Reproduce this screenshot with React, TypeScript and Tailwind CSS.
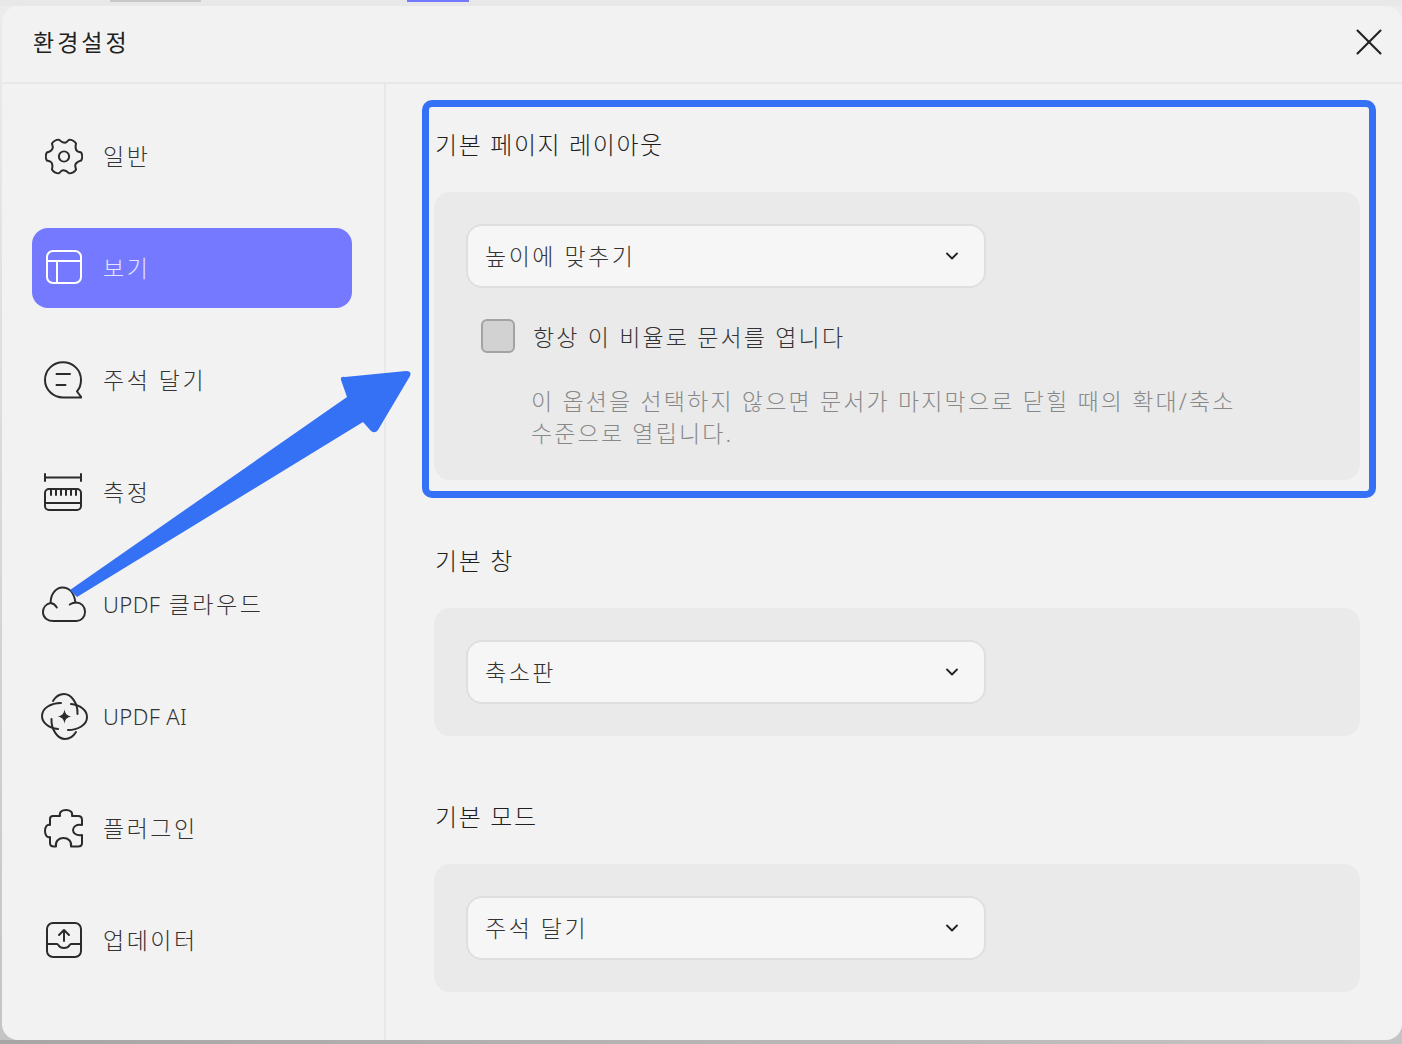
import React from 'react';
import { ChevronDown, X } from 'lucide-react';

function gearPath() {
  const cx = 20;
  const cy = 19.5;
  const pt = (r: number, deg: number) => {
    const a = (deg * Math.PI) / 180;
    return `${(cx + r * Math.cos(a)).toFixed(2)} ${(cy + r * Math.sin(a)).toFixed(2)}`;
  };
  let d = `M${pt(18.6, -13)}`;
  for (let i = 0; i < 6; i++) {
    const a = i * 60;
    d += ` Q${pt(20.4, a)} ${pt(18.6, a + 13)}`;
    d += ` C${pt(15.4, a + 20)} ${pt(13.6, a + 30)} ${pt(15.4, a + 40)}`;
    d += ` L${pt(18.6, a + 47)}`;
  }
  return d + ' Z';
}

function GearIcon() {
  return (
    <svg width="38" height="37" viewBox="0 0 40 39" fill="none" stroke="#2b2b2b" strokeWidth="2.1" strokeLinejoin="round">
      <path d={gearPath()} />
      <circle cx="20" cy="19.5" r="5.4" />
    </svg>
  );
}

function LayoutIcon() {
  return (
    <svg width="36" height="36" viewBox="0 0 36 36" fill="none" stroke="#ffffff" strokeWidth="2">
      <rect x="1" y="1" width="34" height="32" rx="6" />
      <path d="M1 11 H35 M11 11 V33" />
    </svg>
  );
}

function CommentIcon() {
  return (
    <svg className="mr-[2px]" width="38" height="38" viewBox="0 0 38 38" fill="none" stroke="#2b2b2b" strokeWidth="2" strokeLinecap="round" strokeLinejoin="round">
      <path d="M37.5 36.5 H19 C9 36.5 1 28.5 1 19 C1 9 9 1.2 19 1.2 C29 1.2 37 9 37 19 C37 23.5 35.5 27.5 33 30.5 Z" />
      <path d="M12.5 13 H26 M12.5 24 H21.5" />
    </svg>
  );
}

function RulerIcon() {
  return (
    <svg className="mr-[2px]" width="38" height="38" viewBox="0 0 38 38" fill="none" stroke="#2b2b2b" strokeWidth="2" strokeLinecap="round">
      <path d="M1 1 V8 M37 1 V8 M1 4.5 H37" />
      <rect x="1" y="16" width="36" height="21" rx="4" />
      <path d="M1 30 H37 M7 16 V22 M12 16 V22 M17 16 V22 M22 16 V22 M27 16 V22 M32 16 V22" />
    </svg>
  );
}

function CloudIcon() {
  return (
    <svg width="44" height="37" viewBox="0 0 46 38" preserveAspectRatio="none" fill="none" stroke="#2b2b2b" strokeWidth="2" strokeLinecap="round" strokeLinejoin="round">
      <path d="M12 36 H36 C41 36 45 32 45 26.5 C45 21 41 17 35.5 17 C33.5 17 31 17.8 29 19" />
      <path d="M12 36 C6 36 1 32.5 1 27 C1 22 4.5 18.5 9 17.5 C9 8 14.5 1.5 21.5 1.5 C28 1.5 33.5 6.5 35 17" />
      <path d="M9 17.5 C12 18 14 19.5 15.5 22" />
    </svg>
  );
}

function AiIcon() {
  const vertical = 'M12 8 C15 3 19 1 23 1 C30 1 37 10 36.5 21';
  const horizontal = 'M20 10 C10 10 1 15 1 23 C1 30 8 35 17 36';
  return (
    <svg width="47" height="47" viewBox="0 0 47 47" fill="none" stroke="#2b2b2b" strokeWidth="2" strokeLinecap="round">
      <path d={vertical} />
      <path d={vertical} transform="rotate(180 23.5 23.5)" />
      <path d={horizontal} />
      <path d={horizontal} transform="rotate(180 23.5 23.5)" />
      <path d="M23.5 16.5 C24.3 21 26 22.7 30.5 23.5 C26 24.3 24.3 26 23.5 30.5 C22.7 26 21 24.3 16.5 23.5 C21 22.7 22.7 21 23.5 16.5 Z" fill="#2b2b2b" stroke="none" />
    </svg>
  );
}

function PuzzleIcon() {
  return (
    <svg className="mr-[2px]" width="39" height="39" viewBox="0 0 39 39" fill="none" stroke="#2b2b2b" strokeWidth="2" strokeLinejoin="round">
      <path d="M9 7 H16 C15 3 18 1 22 1 C26 1 29 3 28 7 H34 C37 7 38 9 38 11 V16 C32 15 29 18 29 21 C29 24 32 27 38 26 V34 C38 36.5 37 37.5 34 37.5 H27 C28 32 24 29 19.5 29 C15 29 11 32 12 37.5 H10 C7.5 37.5 6 36.5 6 34 V28 C3 29 1 26 1 22 C1 18 3 15 6 16 V10 C6 8 7.5 7 9 7 Z" />
    </svg>
  );
}

function UpdateIcon() {
  return (
    <svg width="36" height="36" viewBox="0 0 36 36" fill="none" stroke="#2b2b2b" strokeWidth="2" strokeLinecap="round" strokeLinejoin="round">
      <rect x="1" y="1" width="34" height="34" rx="6" />
      <path d="M1 22 H11 C13 22 12 26 18 26 C24 26 23 22 25 22 H35" />
      <path d="M18 19 V8 M13 13 L18 8 L23 13" />
    </svg>
  );
}

const navItems = [
  { label: <>일반</>, icon: <GearIcon /> },
  { label: <>보기</>, icon: <LayoutIcon />, active: true },
  { label: <>주석 달기</>, icon: <CommentIcon /> },
  { label: <>측정</>, icon: <RulerIcon /> },
  { label: <><span className="text-[22px] tracking-[0.4px]">UPDF</span> 클라우드</>, icon: <CloudIcon /> },
  { label: <span className="text-[22px] tracking-[0.4px]">UPDF AI</span>, icon: <AiIcon /> },
  { label: <>플러그인</>, icon: <PuzzleIcon /> },
  { label: <>업데이터</>, icon: <UpdateIcon /> },
];

function Dropdown({ value }: { value: string }) {
  return (
    <div className="flex h-[64px] w-[520px] items-center justify-between rounded-[16px] border-2 border-[#dfdfdf] bg-[#f6f6f6] pl-[17px] pr-[22px]">
      <span className="pt-px text-[23px] font-light tracking-[2.5px] text-[#333333]">{value}</span>
      <ChevronDown size={20} strokeWidth={2.2} className="text-[#222222]" />
    </div>
  );
}

export default function App() {
  return (
    <div
      className="relative h-[1044px] w-[1402px] overflow-hidden bg-gradient-to-b from-[#ececec] to-[#c4c4c4] pb-[4px] pl-[2px] pt-[6px] text-[#333333]"
      style={{ fontFamily: '"Noto Sans", "Noto Sans CJK KR", sans-serif' }}
    >
      {/* strips of the page behind the dialog */}
      <div className="absolute inset-x-0 top-0 flex h-[6px] bg-[#e8e8e8]">
        <div className="ml-[110px] h-[2px] w-[91px] bg-[#c8c8c8]" />
        <div className="ml-[206px] h-[2px] w-[62px] bg-[#7479ff]" />
      </div>
      <div className="absolute inset-x-0 bottom-0 h-[4px] bg-gradient-to-r from-[#a6a6a6] to-[#c4c4c4]" />

      <div className="relative flex h-full flex-col rounded-[16px] bg-[#f2f2f2]">
        {/* Title bar */}
        <div className="flex h-[78px] shrink-0 items-center justify-between border-b-2 border-[#e8e8e8] pb-[4px] pl-[31px] pr-[10px]">
          <span className="text-[23px] font-normal tracking-[3px] text-[#222222]">환경설정</span>
          <X size={46} strokeWidth={1.1} className="text-[#222222]" />
        </div>

        <div className="flex min-h-0 flex-1">
          {/* Sidebar */}
          <div className="flex w-[384px] shrink-0 flex-col gap-[32px] border-r-2 border-[#e8e8e8] pl-[30px] pr-[32px] pt-[32px]">
            {navItems.map((item, i) => (
              <div
                key={i}
                className={
                  item.active
                    ? 'flex h-[80px] items-center rounded-[16px] bg-[#7579ff] text-[#e4e5ff]'
                    : 'flex h-[80px] items-center rounded-[16px] text-[#333333]'
                }
              >
                <div className="flex w-[71px] shrink-0 justify-center pr-[7px]">{item.icon}</div>
                <span className="text-[23px] font-light tracking-[2.5px]">{item.label}</span>
              </div>
            ))}
          </div>

          {/* Settings */}
          <div className="flex-1 pl-[48px] pr-[42px] pt-[31px]">
            <h2 className="flex h-[60px] items-center pl-px text-[24px] font-light tracking-[1.6px] text-[#1f1f1f]">기본 페이지 레이아웃</h2>
            <div className="mt-[17px] h-[288px] rounded-[16px] bg-[#eaeaea] pl-[32px] pt-[32px]">
              <Dropdown value="높이에 맞추기" />
              <div className="ml-[15px] mt-[31px] flex h-[34px] items-center gap-[18px]">
                <div className="h-[34px] w-[34px] shrink-0 rounded-[6px] border-2 border-[#a3a3a3] bg-[#d2d2d2]" />
                <span className="pt-[2px] text-[23px] font-light tracking-[2.15px] text-[#333333]">항상 이 비율로 문서를 엽니다</span>
              </div>
              <p className="ml-[65px] mt-[32px] w-[720px] text-[23px] font-light leading-[32px] tracking-[2.15px] text-[#888888]">
                이 옵션을 선택하지 않으면 문서가 마지막으로 닫힐 때의 확대/축소 수준으로 열립니다.
              </p>
            </div>

            <h2 className="mt-[51px] flex h-[60px] items-center pl-px text-[24px] font-light tracking-[1.6px] text-[#1f1f1f]">기본 창</h2>
            <div className="mt-[17px] h-[128px] rounded-[16px] bg-[#eaeaea] pl-[32px] pt-[32px]">
              <Dropdown value="축소판" />
            </div>

            <h2 className="mt-[51px] flex h-[60px] items-center pl-px text-[24px] font-light tracking-[1.6px] text-[#1f1f1f]">기본 모드</h2>
            <div className="mt-[17px] h-[128px] rounded-[16px] bg-[#eaeaea] pl-[32px] pt-[32px]">
              <Dropdown value="주석 달기" />
            </div>
          </div>
        </div>
      </div>

      {/* Annotation drawn over the screenshot */}
      <div className="absolute left-[422px] top-[100px] h-[398px] w-[954px] rounded-[10px] border-[7px] border-[#3571f5]" />
      <svg className="absolute left-0 top-0" width="1402" height="1044" viewBox="0 0 1402 1044" fill="none">
        <path
          d="M70 590 L347 397 L341 380 Q340 376 345 377 L406 371 Q412 371 410 376 L378 430 Q375 434 371 431 L363 422 L77 597 Z"
          fill="#3571f5"
        />
      </svg>
    </div>
  );
}
